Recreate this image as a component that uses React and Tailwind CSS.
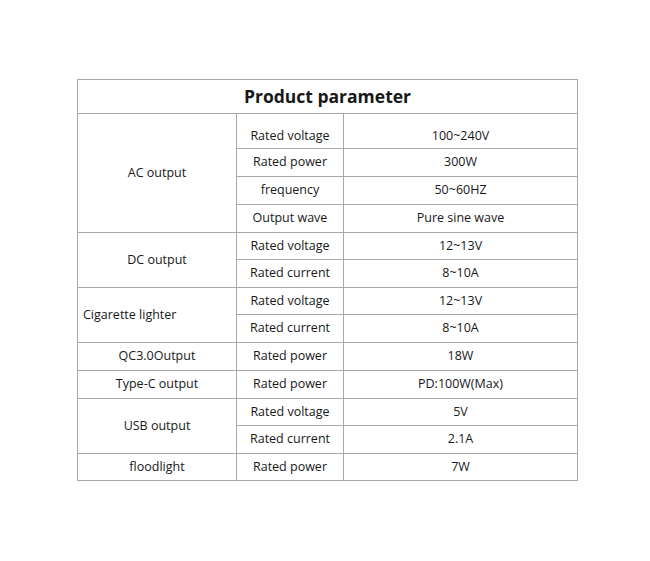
import React from 'react';

const rows = [
  { group: 'AC output', span: 4, label: 'Rated voltage', value: '100~240V', h: 'h-[35px]', first: true },
  { label: 'Rated power', value: '300W', h: 'h-[28px]' },
  { label: 'frequency', value: '50~60HZ', h: 'h-[28px]' },
  { label: 'Output wave', value: 'Pure sine wave', h: 'h-[28px]' },
  { group: 'DC output', span: 2, label: 'Rated voltage', value: '12~13V', h: 'h-[27px]' },
  { label: 'Rated current', value: '8~10A', h: 'h-[28px]' },
  { group: 'Cigarette lighter', span: 2, left: true, label: 'Rated voltage', value: '12~13V', h: 'h-[27px]' },
  { label: 'Rated current', value: '8~10A', h: 'h-[28px]' },
  { group: 'QC3.0Output', span: 1, label: 'Rated power', value: '18W', h: 'h-[28px]' },
  { group: 'Type-C output', span: 1, label: 'Rated power', value: 'PD:100W(Max)', h: 'h-[28px]' },
  { group: 'USB output', span: 2, label: 'Rated voltage', value: '5V', h: 'h-[27px]' },
  { label: 'Rated current', value: '2.1A', h: 'h-[28px]' },
  { group: 'floodlight', span: 1, label: 'Rated power', value: '7W', h: 'h-[27px]' },
];

const cell = 'border border-[#a8a8a8] p-0 align-middle';

export default function App() {
  return (
    <div className="w-[650px] h-[561px] bg-white pt-[79px] pl-[77px] text-[#181818] font-['Open_Sans',sans-serif]">
      <table className="border-collapse table-fixed w-[500px] text-[12.5px] leading-none">
        <colgroup>
          <col className="w-[159px]" />
          <col className="w-[107px]" />
          <col className="w-[234px]" />
        </colgroup>
        <tbody>
          <tr className="h-[34px]">
            <td colSpan={3} className={`${cell} text-center text-[17.5px] font-bold`}>
              Product parameter
            </td>
          </tr>
          {rows.map((r, i) => (
            <tr key={i} className={r.h}>
              {r.group && (
                <td
                  rowSpan={r.span}
                  className={`${cell} ${r.left ? 'text-left pl-[5px]' : 'text-center'}`}
                >
                  {r.group}
                </td>
              )}
              <td className={`${cell} text-center ${r.first ? 'pt-[11px]' : ''}`}>{r.label}</td>
              <td className={`${cell} text-center ${r.first ? 'pt-[11px]' : ''}`}>{r.value}</td>
            </tr>
          ))}
        </tbody>
      </table>
    </div>
  );
}
